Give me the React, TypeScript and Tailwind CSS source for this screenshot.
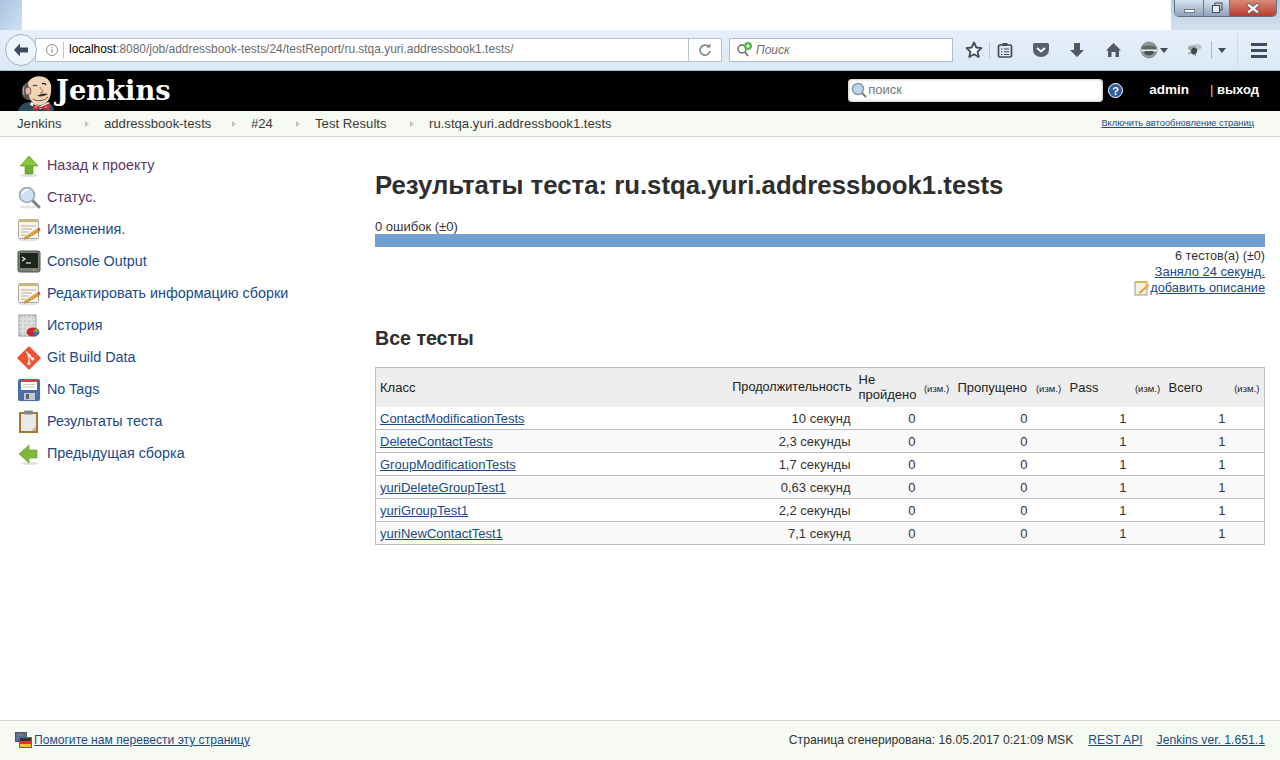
import React from 'react';

const Mascot = () => (
  <svg width="36" height="40" viewBox="0 0 36 40">
    <path d="M0 40C1 34 7 31 13 31L30 31C34 33 36 36 36 40z" fill="#2b4a5c" />
    <path d="M13 31l9 4 9-4 1 3-10 4-10-4z" fill="#f2f2f2" />
    <path d="M11 10C6 12 3 17 4 23c1 4 4 6 8 6l2-5C10 20 9 16 11 10z" fill="#55585a" />
    <path d="M6 15c-1 3-1 6 0 9" stroke="#a9adb0" strokeWidth="1.2" fill="none" />
    <path d="M10 12C12 6 20 4 26 6c6 2 8 8 7 14 0 7-4 14-11 14-6 0-10-4-11-9z" fill="#f0d6b7" />
    <ellipse cx="10" cy="20" rx="3" ry="4" fill="#e8b9a0" stroke="#49373a" strokeWidth="0.7" />
    <path d="M15 15c1-1 3-1 4 0M24 13c1-1 3-1 4 1" stroke="#231f20" strokeWidth="1.1" fill="none" />
    <path d="M22 16l3 5-3 1" stroke="#a9654f" strokeWidth="0.9" fill="none" />
    <path d="M19 25c4-3 8-3 11-2-3 2-7 3-11 2z" fill="#3b3436" />
    <path d="M15 28c5 3 11 2 15-2" stroke="#6b4a3f" strokeWidth="1" fill="none" />
    <path d="M15 33l8 3 9-4v8l-9-3-8 3z" fill="#cc2b2b" />
    <circle cx="18" cy="36" r="0.7" fill="#fff" />
    <circle cx="28" cy="36" r="0.7" fill="#fff" />
  </svg>
);

const NotepadIcon = () => (
  <svg width="24" height="24" viewBox="0 0 24 24">
    <ellipse cx="11" cy="22" rx="10" ry="1.5" fill="#e3e3e3" />
    <rect x="1.500" y="2.500" width="20" height="18" rx="1" fill="#f8f6ea" stroke="#a9a69b" />
    <rect x="2" y="1" width="19" height="3" fill="#c9b779" />
    <path d="M4 8h15M4 11h11M4 14h8M4 17h5" stroke="#b3b2aa" strokeWidth="1" />
    <path d="M8 19l12-8 2 2.500-12 7-3 .8z" fill="#e6a33e" stroke="#94702e" strokeWidth="0.5" />
    <path d="M20 11l2.500-1.500 1 2.500-1.500 1.500z" fill="#d9534f" />
  </svg>
);

const icons: Record<string, React.ReactNode> = {
  up: (
    <svg width="24" height="24" viewBox="0 0 24 24">
      <ellipse cx="12" cy="21.500" rx="9" ry="1.500" fill="#ddd" />
      <path d="M12 2L21 12H16V20H8V12H3z" fill="#6fae2e" stroke="#5c9a24" strokeWidth="0.6" />
      <path d="M12 3L19 11H4z" fill="#8cc63f" />
    </svg>
  ),
  search: (
    <svg width="24" height="24" viewBox="0 0 24 24">
      <ellipse cx="11" cy="21" rx="9" ry="1.500" fill="#e3e3e3" />
      <path d="M15 14l7 7" stroke="#7c7f86" strokeWidth="3" strokeLinecap="round" />
      <circle cx="10" cy="9" r="7.500" fill="#cfe0f3" stroke="#9aa5b1" strokeWidth="1.600" />
      <path d="M5 8c1-3 4-4 6-4" stroke="#fff" strokeWidth="1.500" fill="none" />
    </svg>
  ),
  notepad: <NotepadIcon />,
  console: (
    <svg width="24" height="24" viewBox="0 0 24 24">
      <rect x="1" y="1" width="22" height="21" rx="2" fill="#7b7e74" stroke="#55574f" />
      <rect x="3" y="3" width="18" height="15" fill="#1c261e" />
      <path d="M5 7l3 2-3 2" stroke="#e8f0e4" strokeWidth="1.200" fill="none" />
      <path d="M9 13h5" stroke="#e8f0e4" strokeWidth="1.200" />
      <circle cx="17" cy="20" r="0.700" fill="#b8e986" />
    </svg>
  ),
  history: (
    <svg width="24" height="24" viewBox="0 0 24 24">
      <rect x="2" y="1" width="17" height="21" fill="#cfcfcf" stroke="#9a9a9a" />
      <path d="M2 5h17M2 9h17M2 13h17M2 17h17M6 1v21M10 1v21M14 1v21" stroke="#eeeeee" strokeWidth="0.800" />
      <ellipse cx="16" cy="18" rx="6.500" ry="4.500" fill="#c6262e" />
      <path d="M16 18l6 0c0 2-2 4-5 4z" fill="#3d6fb4" />
      <path d="M16 18l3-4c2 1 3 2 3 4z" fill="#7aa83a" />
    </svg>
  ),
  git: (
    <svg width="26" height="26" viewBox="0 0 26 26">
      <path d="M13 1L25 13 13 25 1 13z" fill="#f05133" stroke="#f05133" strokeLinejoin="round" strokeWidth="1.500" />
      <path d="M10 6l3 4v9M13 10l4 4" stroke="#fff" strokeWidth="1.400" fill="none" />
      <circle cx="13" cy="10" r="1.700" fill="#fff" />
      <circle cx="17" cy="14" r="1.700" fill="#fff" />
      <circle cx="13" cy="19" r="1.700" fill="#fff" />
    </svg>
  ),
  save: (
    <svg width="24" height="24" viewBox="0 0 24 24">
      <rect x="0.500" y="0.500" width="23" height="23" fill="#eef0f3" />
      <rect x="1" y="1" width="22" height="22" rx="2" fill="#4a6fa8" />
      <rect x="4" y="2" width="16" height="10" fill="#fff" />
      <rect x="4" y="2" width="16" height="2" fill="#e0402f" />
      <path d="M6 6.500h12M6 9h12" stroke="#c9c9c9" />
      <rect x="7" y="15" width="11" height="7" fill="#c3c8cf" />
      <rect x="9" y="16" width="3" height="5" fill="#5b6470" />
    </svg>
  ),
  clipboard: (
    <svg width="24" height="24" viewBox="0 0 24 24">
      <rect x="2" y="2" width="19" height="21" fill="#a9772e" />
      <rect x="4" y="4" width="15" height="17" fill="#e9e9e7" />
      <path d="M14 21l5-5v5z" fill="#bdbdbd" />
      <rect x="7" y="0.500" width="9" height="4" rx="1" fill="#8a8a86" />
    </svg>
  ),
  back: (
    <svg width="24" height="24" viewBox="0 0 24 24">
      <ellipse cx="13" cy="21.500" rx="9" ry="1.500" fill="#e0e0e0" />
      <path d="M2 12L12 3V8H20V16H12V21z" fill="#7fb83a" stroke="#639a2a" strokeWidth="0.600" />
    </svg>
  ),
};

const sideItems = [
  { icon: 'up', label: 'Назад к проекту', visited: true },
  { icon: 'search', label: 'Статус.', visited: true },
  { icon: 'notepad', label: 'Изменения.', visited: false },
  { icon: 'console', label: 'Console Output', visited: false },
  { icon: 'notepad', label: 'Редактировать информацию сборки', visited: false },
  { icon: 'history', label: 'История', visited: false },
  { icon: 'git', label: 'Git Build Data', visited: false },
  { icon: 'save', label: 'No Tags', visited: false },
  { icon: 'clipboard', label: 'Результаты теста', visited: false },
  { icon: 'back', label: 'Предыдущая сборка', visited: false },
];

const crumbs = [
  { label: 'Jenkins', w: 'w-[87px]' },
  { label: 'addressbook-tests', w: 'w-[147px]' },
  { label: '#24', w: 'w-[64px]' },
  { label: 'Test Results', w: 'w-[114px]' },
  { label: 'ru.stqa.yuri.addressbook1.tests', w: 'w-auto' },
];

const rows = [
  ['ContactModificationTests', '10 секунд'],
  ['DeleteContactTests', '2,3 секунды'],
  ['GroupModificationTests', '1,7 секунды'],
  ['yuriDeleteGroupTest1', '0,63 секунд'],
  ['yuriGroupTest1', '2,2 секунды'],
  ['yuriNewContactTest1', '7,1 секунд'],
];

const Izm = () => <span className="text-[9.5px] text-[#222]">(изм.)</span>;

const BrowserBar = () => (
  <div className="h-[41px] shrink-0 bg-gradient-to-b from-[#e6f0fa] to-[#dbe8f6] border-b border-[#a9bdd1] flex items-center pl-[5px]">
    <div className="w-[32px] h-[32px] rounded-full border border-[#9fb2c6] bg-[#eef4fb] flex items-center justify-center z-10">
      <svg width="16" height="14" viewBox="0 0 16 14"><path d="M7 0.500L1 7l6 6.500V9.500h8v-5H7z" fill="#3b4b5c" /></svg>
    </div>
    <div className="w-[654px] h-[24px] -ml-[2px] bg-white border border-[#b3c3d3] flex items-center pl-[9px] text-[11.950px] whitespace-nowrap">
      <svg width="14" height="14" viewBox="0 0 14 14" className="mr-[4px]">
        <circle cx="7" cy="7" r="5.500" fill="none" stroke="#8a8f96" />
        <path d="M7 6v4M7 3.500v1.200" stroke="#8a8f96" strokeWidth="1.200" />
      </svg>
      <div className="w-px h-[16px] bg-[#c6c6c6] mr-[5px]" />
      <span className="text-black">localhost</span>
      <span className="text-[#6b6b6b]">:8080/job/addressbook-tests/24/testReport/ru.stqa.yuri.addressbook1.tests/</span>
    </div>
    <div className="w-[33px] h-[24px] bg-white border border-l-0 border-[#b3c3d3] flex items-center justify-center">
      <svg width="14" height="14" viewBox="0 0 14 14"><path d="M11 4a5 5 0 1 0 1 4" fill="none" stroke="#7d8790" strokeWidth="1.600" /><path d="M8 4.500h4.500V0.500z" fill="#7d8790" /></svg>
    </div>
    <div className="ml-[7px] w-[224px] h-[24px] bg-white border border-[#a9bdd1] flex items-center pl-[6px] text-[12px] italic text-[#6d6d6d]">
      <svg width="20" height="16" viewBox="0 0 20 16">
        <circle cx="6" cy="7" r="4" fill="none" stroke="#666" strokeWidth="1.400" />
        <path d="M9 10l3 4" stroke="#666" strokeWidth="1.600" />
        <circle cx="12" cy="4" r="4" fill="#58b947" />
        <path d="M12 2v4M10 4h4" stroke="#fff" strokeWidth="1.200" />
      </svg>
      Поиск
    </div>
    <div className="flex items-center">
      <svg width="18" height="18" viewBox="0 0 18 18" className="ml-[12px]"><path d="M9 1.500l2.300 5 5.200.6-3.900 3.600 1.100 5.300L9 13.300 4.300 16l1.100-5.300L1.500 7.100l5.200-.6z" fill="#f4f8fc" stroke="#3f4b57" strokeWidth="1.800" strokeLinejoin="round" /></svg>
      <div className="w-px h-[16px] bg-[#b8c7d6] ml-[6px]" />
      <svg width="16" height="16" viewBox="0 0 16 16" className="ml-[7px]"><rect x="1.500" y="3" width="13" height="12" rx="1.500" fill="#dfe8f1" stroke="#3f4b57" strokeWidth="1.700" /><rect x="5.500" y="1" width="5" height="3" fill="#3f4b57" /><path d="M4 7h1.500M7 7h5M4 9.800h1.500M7 9.800h5M4 12.500h1.500M7 12.500h5" stroke="#3f4b57" /></svg>
      <svg width="18" height="16" viewBox="0 0 18 16" className="ml-[19px]"><path d="M1 2.500Q1 1 2.500 1h13Q17 1 17 2.500V8a8 7 0 0 1-16 0z" fill="#56616c" /><path d="M5 6l4 3.500L13 6" fill="none" stroke="#fff" strokeWidth="2" /></svg>
      <svg width="16" height="16" viewBox="0 0 16 16" className="ml-[19px]"><path d="M5 1h6v7h4l-7 7-7-7h4z" fill="#4e5964" /></svg>
      <svg width="17" height="16" viewBox="0 0 17 16" className="ml-[20px]"><path d="M8.500 1L16 8.500h-2V15h-3.500V10h-4v5H3V8.500H1z" fill="#4e5964" /></svg>
      <svg width="18" height="18" viewBox="0 0 18 18" className="ml-[18px]"><circle cx="9" cy="9" r="8.500" fill="#8f9699" /><path d="M2 6c3-2 11-2 14 0v2H2z" fill="#5f6a5f" /><path d="M1 9.500h16" stroke="#e8f1e8" strokeWidth="1.500" /><path d="M4 12c3 3 7 3 10 0l-1-2H5z" fill="#4a544c" /></svg>
      <svg width="8" height="5" viewBox="0 0 8 5" className="ml-[2px]"><path d="M0 0h8L4 5z" fill="#3f4b57" /></svg>
      <svg width="18" height="16" viewBox="0 0 18 16" className="ml-[18px]"><ellipse cx="11" cy="5" rx="5" ry="3" fill="#c2c6c8" /><ellipse cx="6" cy="6" rx="4" ry="2.500" fill="#9ea3a6" /><ellipse cx="8" cy="9" rx="3" ry="3.500" fill="#43474a" transform="rotate(30 8 9)" /><path d="M2 12l4-2M9 14l1-3" stroke="#777b7f" /></svg>
      <div className="w-px h-[18px] bg-[#a9b7c4] ml-[7px]" />
      <svg width="8" height="5" viewBox="0 0 8 5" className="ml-[6px]"><path d="M0 0h8L4 5z" fill="#3f4b57" /></svg>
      <div className="w-px h-[34px] bg-[#cbd8e5] ml-[11px]" />
      <div className="ml-[13px] w-[16px] flex flex-col gap-[3px]">
        <div className="h-[3px] bg-[#3f4b57]" />
        <div className="h-[3px] bg-[#3f4b57]" />
        <div className="h-[3px] bg-[#3f4b57]" />
      </div>
    </div>
  </div>
);

const App = () => {
  return (
    <div className="h-[760px] w-[1280px] overflow-hidden flex flex-col bg-white text-[13px] text-[#333] font-['Liberation_Sans',Arial,sans-serif]">
      <div className="h-[30px] shrink-0 flex bg-white">
        <div className="w-[22px] bg-gradient-to-br from-[#a9c4e2] to-[#d2e0ef]" />
        <div className="flex-1" />
        <div className="w-[109px] bg-gradient-to-b from-[#b9cbdf] to-[#d3e0ee] pl-[3px]">
          <div className="w-[103px] h-[17px] flex rounded-b-[5px] border border-t-0 border-[#5f7083] overflow-hidden">
            <div className="w-[28px] bg-gradient-to-b from-[#d7e2ee] to-[#8ea3ba] flex items-end justify-center pb-[3px]"><div className="w-[11px] h-[4px] bg-white border border-[#6c7a88]" /></div>
            <div className="w-[26px] bg-gradient-to-b from-[#d7e2ee] to-[#8ea3ba] border-l border-[#6c7a88] flex items-center justify-center">
              <svg width="12" height="12" viewBox="0 0 12 12"><rect x="4" y="1" width="7" height="7" fill="none" stroke="#3f4b57" /><rect x="1.500" y="3.500" width="7" height="7" fill="#e9eef4" stroke="#3f4b57" /></svg>
            </div>
            <div className="flex-1 bg-gradient-to-b from-[#d98a7c] to-[#b93a2a] border-l border-[#6c7a88] flex items-center justify-center">
              <svg width="14" height="11" viewBox="0 0 14 11"><path d="M1.500 1l11 9M12.500 1l-11 9" stroke="#4a4a4a" strokeWidth="4" /><path d="M2 1.500l10 8M12 1.500l-10 8" stroke="#fff" strokeWidth="2.500" /></svg>
            </div>
          </div>
        </div>
      </div>
      <BrowserBar />

      <header className="h-[40px] shrink-0 bg-black flex items-center">
        <div className="pl-[18px] h-[40px] flex items-end overflow-hidden"><Mascot /></div>
        <span className="ml-[2px] font-['DejaVu_Serif',Georgia,serif] font-bold text-[27.300px] leading-none text-white">Jenkins</span>
        <div className="ml-auto flex items-center -mt-[2px]">
          <div className="w-[255px] h-[23px] bg-white rounded-[4px] shadow-[inset_0_0_3px_#999] flex items-center pl-[3px] text-[13px] text-[#777]">
            <svg width="16" height="16" viewBox="0 0 16 16"><path d="M10 10l5 5" stroke="#777" strokeWidth="2" /><circle cx="7" cy="7" r="5.500" fill="#bcd4ee" stroke="#7f96ad" strokeWidth="1.400" /></svg>
            <span className="ml-[1px]">поиск</span>
          </div>
          <div className="ml-[5px] w-[15px] h-[15px] rounded-full bg-[#2f5f9f] border border-white text-white text-[11px] font-bold leading-[14px] text-center">?</div>
          <span className="ml-[26px] text-white font-bold text-[13.500px]">admin</span>
          <span className="ml-[21px] mr-[21px] text-white font-bold text-[13px]"><span className="font-normal text-[#e0d070]">|</span> выход</span>
        </div>
      </header>

      <nav className="h-[26px] shrink-0 bg-[#f6faf2] border-b border-[#d3d7cf] flex items-center pl-[17px] pt-[1px] text-[13.150px] text-[#3a3a3a]">
        {crumbs.map((c, i) => (
          <div key={c.label} className={`${c.w} flex items-center whitespace-nowrap`}>
            <span>{c.label}</span>
            {i < crumbs.length - 1 && (
              <span className="ml-auto mr-[15px] w-0 h-0 border-y-[3px] border-y-transparent border-l-[4px] border-l-[#c0c0c0]" />
            )}
          </div>
        ))}
        <a className="ml-auto mr-[26px] text-[9.300px] text-[#204a87] underline">Включить автообновление страниц</a>
      </nav>

      <div className="flex-1 flex min-h-0">
        <aside className="w-[375px] shrink-0 pt-[13px] pl-[17px]">
          {sideItems.map((item, i) => (
            <div key={i} className="h-[32px] flex items-center gap-[6px]">
              <div className="w-[24px] h-[24px] flex items-center justify-center">{icons[item.icon]}</div>
              <a className={`text-[14.350px] ${item.visited ? 'text-[#5c3566]' : 'text-[#204a87]'}`}>{item.label}</a>
            </div>
          ))}
        </aside>

        <main className="w-[890px]">
          <h1 className="mt-[33px] text-[25.750px] leading-[30px] font-bold text-[#2e2e2e]">Результаты теста: ru.stqa.yuri.addressbook1.tests</h1>
          <div className="mt-[19px] leading-[16px]">0 ошибок (±0)</div>
          <div className="h-[13px] bg-[#729fcf] -mt-[1px]" />
          <div className="mt-[1px] text-right leading-[16px]">
            <div className="text-[12.600px]">6 тестов(а) (±0)</div>
            <div><a className="text-[#204a87] underline">Заняло 24 секунд.</a></div>
            <div className="flex justify-end items-center text-[12.800px]">
              <svg width="16" height="16" viewBox="0 0 16 16"><rect x="1" y="2" width="12" height="13" fill="#f4f0dc" stroke="#999" /><rect x="1" y="1" width="12" height="2" fill="#d8b94c" /><path d="M5 12l9-8 1.500 1.500-9 8-2 .5z" fill="#e6a33e" /></svg>
              <a className="text-[#204a87] underline">добавить описание</a>
            </div>
          </div>
          <h2 className="mt-[30px] text-[19.600px] leading-[24px] font-bold text-[#2e2e2e]">Все тесты</h2>
          <table className="mt-[17px] w-[890px] table-fixed border-collapse border border-[#bbb]">
            <colgroup>
              <col className="w-[352px]" /><col className="w-[127px]" /><col className="w-[65px]" /><col className="w-[34px]" /><col className="w-[78px]" /><col className="w-[34px]" /><col className="w-[65px]" /><col className="w-[34px]" /><col className="w-[65px]" /><col />
            </colgroup>
            <thead>
              <tr className="h-[39px] bg-[#eeeeee] text-[#222]">
                <th className="px-[4px] font-normal text-left">Класс</th>
                <th className="pl-[4px] pr-[3px] font-normal text-right whitespace-nowrap text-[12.700px]">Продолжительность</th>
                <th className="px-[4px] font-normal text-left leading-[15px]">Не пройдено</th>
                <th className="font-normal text-center"><Izm /></th>
                <th className="px-[4px] font-normal text-left">Пропущено</th>
                <th className="font-normal text-center"><Izm /></th>
                <th className="px-[4px] font-normal text-left">Pass</th>
                <th className="font-normal text-center"><Izm /></th>
                <th className="px-[4px] font-normal text-left">Всего</th>
                <th className="font-normal text-center"><Izm /></th>
              </tr>
            </thead>
            <tbody>
              {rows.map((r, i) => (
                <tr key={r[0]} className={`h-[23px] ${i > 0 ? 'border-t border-[#bbb]' : ''} ${i % 2 ? 'bg-[#fafafa]' : 'bg-white'}`}>
                  <td className="px-[4px] pt-[1px]"><a className="text-[#204a87] underline">{r[0]}</a></td>
                  <td className="px-[4px] pt-[1px] text-right">{r[1]}</td>
                  <td className="px-[4px] pt-[1px] text-right">0</td>
                  <td />
                  <td className="px-[4px] pt-[1px] text-right">0</td>
                  <td />
                  <td className="px-[4px] pt-[1px] text-right">1</td>
                  <td />
                  <td className="px-[4px] pt-[1px] text-right">1</td>
                  <td />
                </tr>
              ))}
            </tbody>
          </table>
        </main>
      </div>

      <footer className="h-[40px] shrink-0 bg-[#f6faf2] border-t border-[#d3d7cf] flex items-center px-[15px] pb-[1px] text-[12.100px] text-[#333]">
        <svg width="17" height="16" viewBox="0 0 17 16" className="mr-[2px]">
          <rect x="0.500" y="0.500" width="11" height="9" fill="#4a6fa8" stroke="#555" />
          <path d="M2 3h6M2 6h8" stroke="#e25a4f" />
          <rect x="4.500" y="5.500" width="12" height="10" fill="#333" stroke="#666" />
          <rect x="5" y="9" width="11" height="3" fill="#d33" />
          <rect x="5" y="12" width="11" height="3" fill="#f0c52e" />
        </svg>
        <a className="text-[#204a87] underline">Помогите нам перевести эту страницу</a>
        <span className="ml-auto text-[12.200px]">Страница сгенерирована: 16.05.2017 0:21:09 MSK</span>
        <a className="ml-[15px] text-[#204a87] underline">REST API</a>
        <a className="ml-[14px] text-[12.200px] text-[#204a87] underline">Jenkins ver. 1.651.1</a>
      </footer>
    </div>
  );
};

export default App;
